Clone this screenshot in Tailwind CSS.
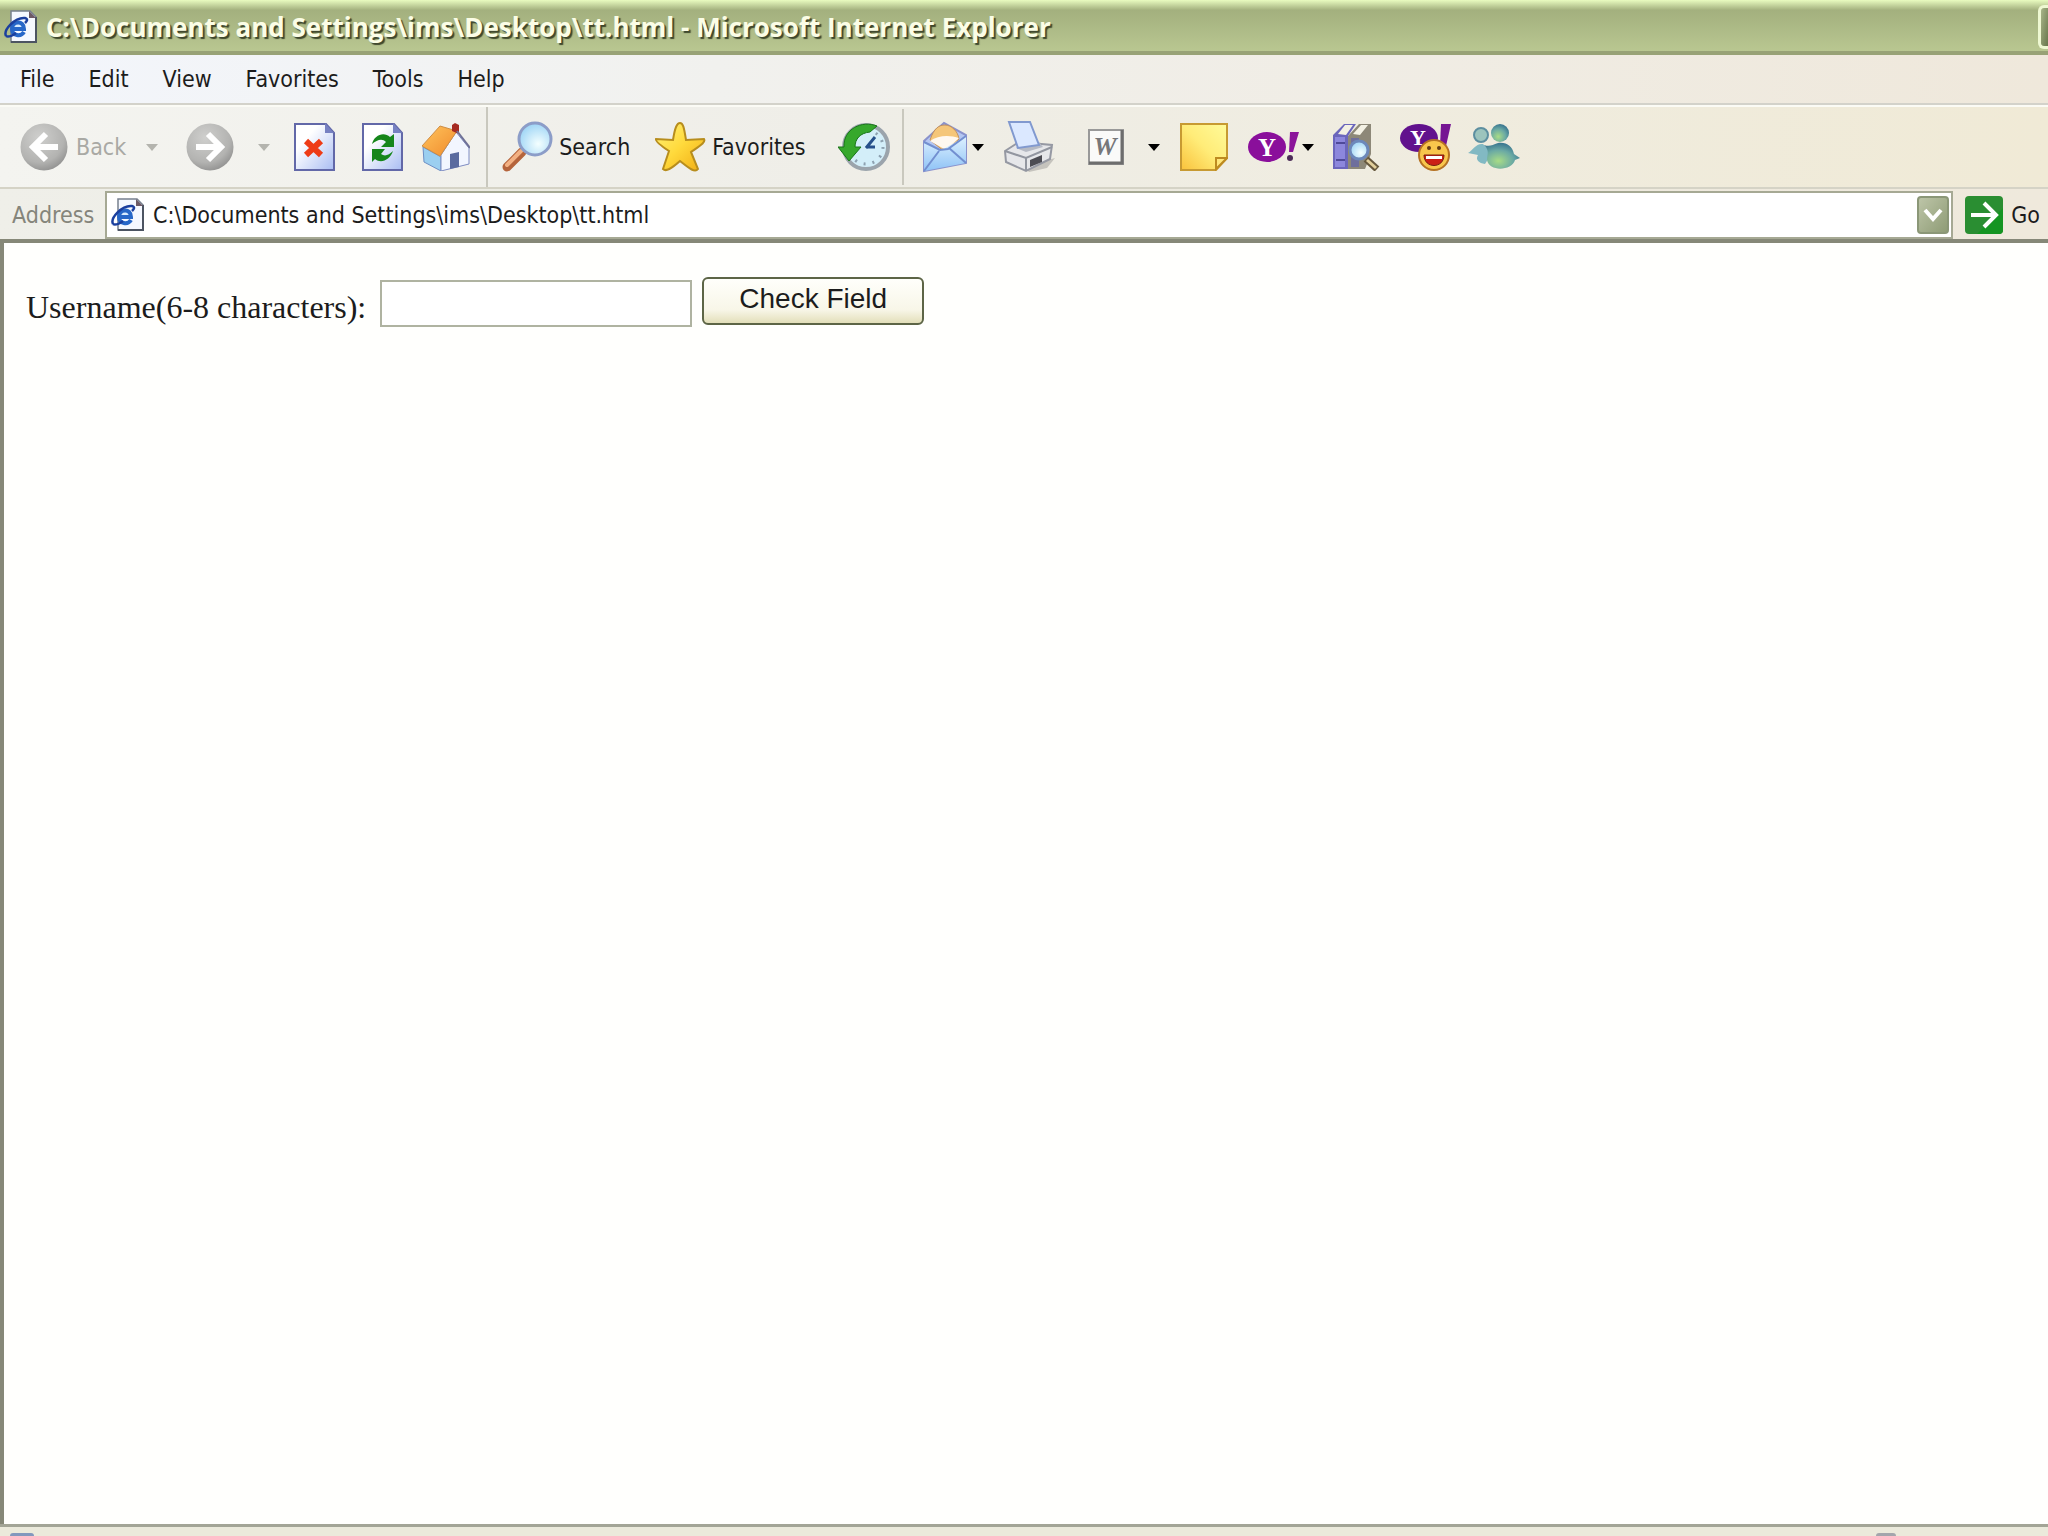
<!DOCTYPE html>
<html lang="en">
<head>
    <meta charset="UTF-8">
    <meta name="viewport" content="width=device-width, initial-scale=1.0">
    <title>C:\Documents and Settings\ims\Desktop\tt.html - Microsoft Internet Explorer</title>
    <script src="https://cdn.jsdelivr.net/npm/@tailwindcss/browser@4"></script>
</head>
<body class="flex h-screen flex-col overflow-hidden bg-[#fffffd] font-['DejaVu_Sans_Condensed','Noto_Sans',sans-serif] text-[23px] text-[#1c1c1c]">

    <!-- Shared icon shapes -->
    <svg class="absolute size-0" aria-hidden="true">
        <defs>
            <linearGradient id="paper" x1="0" y1="0" x2="1" y2="1"><stop offset="0.3" stop-color="#fff"/><stop offset="1" stop-color="#a9bdf3"/></linearGradient>
            <radialGradient id="gray" cx="0.4" cy="0.3" r="0.75"><stop offset="0" stop-color="#cfcfcd"/><stop offset="0.7" stop-color="#b3b3b1"/><stop offset="1" stop-color="#8f8f8e"/></radialGradient>
            <radialGradient id="glass" cx="0.6" cy="0.65" r="0.7"><stop offset="0" stop-color="#f4ffff"/><stop offset="1" stop-color="#98d2f5"/></radialGradient>
            <linearGradient id="gold" x1="0" y1="0" x2="1" y2="1"><stop offset="0" stop-color="#fff27a"/><stop offset="0.5" stop-color="#ffd93b"/><stop offset="1" stop-color="#f0ab12"/></linearGradient>
            <linearGradient id="roof" x1="0" y1="0" x2="1" y2="1"><stop offset="0" stop-color="#ffc45c"/><stop offset="1" stop-color="#f08a2c"/></linearGradient>
            <linearGradient id="mail" x1="0" y1="0" x2="0" y2="1"><stop offset="0" stop-color="#dff2ff"/><stop offset="1" stop-color="#8fc3f6"/></linearGradient>
            <linearGradient id="note" x1="1" y1="0" x2="0" y2="1"><stop offset="0" stop-color="#fffb9a"/><stop offset="0.5" stop-color="#ffec78"/><stop offset="1" stop-color="#f9c23c"/></linearGradient>
            <radialGradient id="buddy" cx="0.4" cy="0.7" r="0.7"><stop offset="0" stop-color="#a8dc86"/><stop offset="0.6" stop-color="#6aa9a4"/><stop offset="1" stop-color="#39758f"/></radialGradient>
            <symbol id="ie-page" viewBox="0 0 34 34">
                <path d="M7 1h19l6 6v25H7z" fill="#f5f8ff" stroke="#77808f" stroke-width="1.5"/>
                <path d="M32 7v25H7" fill="none" stroke="#4c5462" stroke-width="2"/>
                <path d="M25 1l7 7h-7z" fill="#6d5a66"/>
                <path d="M21 19H9c0-11 12-11 12-1z" fill="#d9ecff"/>
                <path d="M20 22c-3 5-12 4-12-3 0-8 12-9 12 0H9" fill="none" stroke="#2767c8" stroke-width="4"/>
                <path d="M2 26C-1 20 11 7 21 8c4 1 1 4 0 5M2 26c3 2 7-1 10-3" fill="none" stroke="#1b3f9e" stroke-width="2.5"/>
            </symbol>
            <symbol id="caret" viewBox="0 0 12 7"><path d="M0 0h12L6 7z"/></symbol>
        </defs>
    </svg>

    <!-- Title bar -->
    <header class="flex h-[55px] shrink-0 items-center justify-between border-b-4 border-[#98a276] bg-linear-to-b from-[#e9fbc0] via-[#a3b07e] via-20% to-[#b9c791] pt-[2px] pl-1">
        <h1 class="flex items-center gap-2 font-['Open_Sans','Noto_Sans',sans-serif] text-[26px] leading-8 font-bold whitespace-nowrap text-[#fbfde6] [text-shadow:2px_2px_1px_#3f472c]">
            <svg class="size-[34px]"><use href="#ie-page"/></svg>
            C:\Documents and Settings\ims\Desktop\tt.html - Microsoft Internet Explorer
        </h1>
        <button class="h-[44px] w-[10px] rounded-l-md border-3 border-r-0 border-[#eef8d2] bg-linear-to-br from-[#a9b68a] to-[#68764c]" aria-label="Minimize"></button>
    </header>

    <!-- Menu bar -->
    <nav class="flex h-[50px] shrink-0 items-center gap-[34px] border-b-2 border-[#d3d2ca] bg-linear-to-r from-[#f3f6fc] via-[#f1f1ee] via-35% to-[#efe8db] pl-5">
        <a href="#">File</a>
        <a href="#">Edit</a>
        <a href="#">View</a>
        <a href="#">Favorites</a>
        <a href="#">Tools</a>
        <a href="#">Help</a>
    </nav>

    <!-- Standard toolbar -->
    <div class="flex h-[84px] shrink-0 items-center border-t-2 border-b-2 border-t-[#fbfbf5] border-b-[#d5d3c6] bg-linear-to-r from-[#f4f4f0] via-[#efeee8] via-40% to-[#f0ead6] pl-5">
        <button class="flex items-center gap-2 text-[#a9a9a4]">
            <svg class="size-12" viewBox="0 0 48 48"><circle cx="24" cy="24" r="23.5" fill="url(#gray)"/><path d="M38 24H14M26 11L13 24l13 13" fill="none" stroke="#fff" stroke-width="6"/></svg>
            Back
        </button>
        <button class="ml-5 w-4" aria-label="Back history"><svg class="h-[7px] w-3 fill-[#b4b4ae]"><use href="#caret"/></svg></button>
        <button class="ml-6" aria-label="Forward">
            <svg class="size-12" viewBox="0 0 48 48"><circle cx="24" cy="24" r="23.5" fill="url(#gray)"/><path d="M10 24h24M22 11l13 13-13 13" fill="none" stroke="#fff" stroke-width="6"/></svg>
        </button>
        <button class="ml-6 w-4" aria-label="Forward history"><svg class="h-[7px] w-3 fill-[#b4b4ae]"><use href="#caret"/></svg></button>
        <button class="ml-4" aria-label="Stop">
            <svg class="size-12" viewBox="0 0 48 48">
                <path d="M5 1h31l8 9v37H5z" fill="url(#paper)" stroke="#6268a8" stroke-width="2"/><path d="M35 0v10h9z" fill="#7781c2"/>
                <path d="M16 18l15 14M31 18L16 32" stroke="#ee3b16" stroke-width="6"/>
            </svg>
        </button>
        <button class="ml-5" aria-label="Refresh">
            <svg class="size-12" viewBox="0 0 48 48">
                <path d="M5 1h31l8 9v37H5z" fill="url(#paper)" stroke="#6268a8" stroke-width="2"/><path d="M35 0v10h9z" fill="#7781c2"/>
                <path d="M14 21c2-9 12-13 18-7l4-3v13H23l5-5c-4-4-9-2-14 2zM35 28c-3 9-12 13-18 8l-3 3V26h13l-4 5c4 3 8 1 12-3z" fill="#15861b"/>
            </svg>
        </button>
        <button class="ml-4" aria-label="Home">
            <svg class="size-12" viewBox="0 0 48 48">
                <path d="M1 24l18 10v14L2 39z" fill="#9bcff0" stroke="#6d8fc4"/>
                <path d="M19 32L34 9l13 16v16L19 48z" fill="#f2f6ff" stroke="#7f8cc2"/>
                <path d="M0 23L18 3l17 5-17 25z" fill="url(#roof)" stroke="#ce8d44"/>
                <path d="M30 8v-6l3-2 4 2v9z" fill="#a52a20"/>
                <path d="M35 8l13 17" stroke="#6f7196" stroke-width="2"/>
                <path d="M28 31l9-2v15l-9 2z" fill="#5a6b9f"/>
            </svg>
        </button>
        <div class="ml-4 h-[80px] w-[2px] bg-[#c9c8be]"></div>
        <button class="ml-3.5 flex items-center gap-1.5">
            <svg class="h-[52px] w-[51px]" viewBox="0 0 51 52">
                <path d="M5 46L20 31" stroke="#b5643c" stroke-width="9" stroke-linecap="round"/><path d="M5 44L19 30" stroke="#f3b183" stroke-width="4" stroke-linecap="round"/>
                <circle cx="33" cy="18" r="16" fill="url(#glass)" stroke="#8c9dc8" stroke-width="3"/>
            </svg>
            Search
        </button>
        <button class="ml-6 flex items-center gap-1.5">
            <svg class="h-[52px] w-[52px]" viewBox="0 0 52 52"><path d="M26 2c3 0 4 4 6 17l18-1c2 3-3 6-13 13l7 17c-3 4-8 0-18-8-9 8-14 11-17 8l6-18C6 24 1 20 2 18l17 1C21 6 23 2 26 2z" fill="url(#gold)" stroke="#b78d1d" stroke-width="2"/></svg>
            Favorites
        </button>
        <button class="ml-8" aria-label="History">
            <svg class="h-12 w-[52px]" viewBox="0 0 52 48">
                <circle cx="28" cy="24" r="22" fill="#d3eef9" stroke="#9ba4ac" stroke-width="4"/>
                <circle cx="28" cy="24" r="17" fill="none" stroke="#8da1b0" stroke-width="3" stroke-dasharray="2 7"/>
                <path d="M28 25l9-11M28 24h9" stroke="#26508b" stroke-width="3"/>
                <path d="M39 3C24-3 5 6 6 24H0l11 14 12-14h-6c0-8 5-14 15-15z" fill="#36a82c" stroke="#197519"/>
            </svg>
        </button>
        <div class="ml-3 h-[76px] w-[2px] bg-[#c9c8be]"></div>
        <button class="ml-4.5" aria-label="Mail">
            <svg class="h-[52px] w-[46px]" viewBox="0 0 46 52">
                <path d="M2 20L22 2l22 12v28L2 50z" fill="#b4c6f2" stroke="#8a92cc" stroke-width="2"/>
                <path d="M8 19C12 7 17 4 23 4s13 6 14 14L23 31z" fill="#f5c679" stroke="#c08f5e"/><path d="M8 20c8-6 20-6 29-3L24 29z" fill="#fff8ef"/>
                <path d="M2 21l18 8 24-14v27L2 50z" fill="url(#mail)"/>
                <path d="M2 21l16 8 8-1 18-13M2 50l15-20M44 42L27 27" fill="none" stroke="#728fd0" stroke-width="2"/>
            </svg>
        </button>
        <button class="w-4" aria-label="Mail options"><svg class="ml-1 h-[7px] w-3 fill-black"><use href="#caret"/></svg></button>
        <button class="ml-5" aria-label="Print">
            <svg class="h-[52px] w-[52px]" viewBox="0 0 52 52">
                <path d="M20 46l31-9-8 10-18 4z" fill="#c5c3bd"/>
                <path d="M1 30l14-9 33 3-2 14-24 12L2 41z" fill="#e6e7ea" stroke="#9699a3" stroke-width="2"/>
                <path d="M1 30l21 7 26-11M22 37v13" fill="none" stroke="#9296a0" stroke-width="2"/>
                <path d="M12 27l10 4 17-5-4-5-17-1z" fill="#b6bac4"/>
                <path d="M5 1h21l9 23-21 3z" fill="#dbe8ff" stroke="#8199cf" stroke-width="2"/>
                <path d="M26 39l12-5v7l-12 5z" fill="#4c4c53"/>
            </svg>
        </button>
        <button class="ml-8" aria-label="Edit with Word">
            <svg class="h-[36px] w-[36px]" viewBox="0 0 36 36">
                <path d="M1 1h34v34H1z" fill="#fafaf9" stroke="#999" stroke-width="2"/><path d="M34 1v33H1" fill="none" stroke="#6d6d6d" stroke-width="3"/>
                <text x="17" y="26" text-anchor="middle" font-family="Liberation Serif" font-size="26" font-weight="bold" font-style="italic" fill="#77777a">W</text>
            </svg>
        </button>
        <button class="ml-6 w-4" aria-label="Edit options"><svg class="h-[7px] w-3 fill-black"><use href="#caret"/></svg></button>
        <button class="ml-4" aria-label="Notes">
            <svg class="h-12 w-12" viewBox="0 0 48 48"><path d="M1 1h46v34L36 47H1z" fill="url(#note)" stroke="#c79a32" stroke-width="2"/><path d="M36 46V35h11z" fill="#ffe67a" stroke="#bd8a20" stroke-width="2"/></svg>
        </button>
        <button class="ml-5" aria-label="Yahoo">
            <svg class="h-[32px] w-[52px]" viewBox="0 0 52 32">
                <ellipse cx="19" cy="16" rx="19" ry="15" fill="#8a0f9b"/>
                <text x="19" y="25" text-anchor="middle" font-family="Liberation Serif" font-size="25" font-weight="bold" fill="#fff">Y</text>
                <path d="M42 1h9l-6 20h-4z" fill="#8b149a"/><circle cx="42" cy="27" r="3" fill="#4c2c58"/>
            </svg>
        </button>
        <button class="w-4" aria-label="Yahoo options"><svg class="ml-[2px] h-[7px] w-3 fill-black"><use href="#caret"/></svg></button>
        <button class="ml-4" aria-label="Research">
            <svg class="h-12 w-12" viewBox="0 0 48 48">
                <path d="M1 12L12 1h12l-8 12v33H1z" fill="#6b66bc"/><path d="M3 14h10v30H3z" fill="#8c87dc"/><path d="M4 20h9M4 37h9" stroke="#4f4a99" stroke-width="2"/>
                <path d="M16 13L27 1h12v30l-6 15H16z" fill="#8d8878"/><path d="M6 11l7-9h8l-7 10zM21 11l8-9h7l-8 10z" fill="#f3f1e4"/><path d="M19 15h8v29h-8z" fill="#6f6f9c"/>
                <path d="M34 36l11 10" stroke="#66583e" stroke-width="7"/><path d="M35 37l9 8" stroke="#e2cf9c" stroke-width="3"/>
                <circle cx="27" cy="27" r="9" fill="url(#glass)" stroke="#6c88ba" stroke-width="3"/>
            </svg>
        </button>
        <button class="ml-5" aria-label="Yahoo Messenger">
            <svg class="h-12 w-[52px]" viewBox="0 0 52 48">
                <ellipse cx="19" cy="15" rx="19" ry="14" fill="#61118d"/>
                <text x="18" y="22" text-anchor="middle" font-family="Liberation Serif" font-size="22" font-weight="bold" fill="#fff">Y</text>
                <path d="M41 1h10l-5 22h-6z" fill="#761593"/>
                <circle cx="34" cy="32" r="15" fill="#f8c64c" stroke="#b57223" stroke-width="2"/>
                <path d="M24 32h20c0 14-20 14-20 0z" fill="#cb1e16" stroke="#762011"/><path d="M26 33h16v3H26z" fill="#fff"/>
                <circle cx="29" cy="25" r="2" fill="#643c12"/><circle cx="39" cy="25" r="2" fill="#643c12"/>
            </svg>
        </button>
        <button class="ml-4" aria-label="Windows Messenger">
            <svg class="h-12 w-[52px]" viewBox="0 0 52 48">
                <circle cx="13" cy="12" r="7" fill="#9cc4bd" stroke="#5d8fa0" stroke-width="2"/>
                <path d="M0 30c5-3 8-10 15-9l9 9-7 11C11 40 7 37 10 32z" fill="#82b9c3"/>
                <circle cx="32" cy="10" r="9" fill="url(#buddy)"/>
                <path d="M16 22c6 2 8 0 14-2 9-1 14 3 16 11l6 4-5 2c-3 11-26 12-28 0 0-6 3-9-3-15z" fill="url(#buddy)"/>
            </svg>
        </button>
    </div>

    <!-- Address bar -->
    <form class="flex h-[50px] shrink-0 items-center bg-linear-to-r from-[#efefe9] via-[#ecebe2] via-40% to-[#efe9dc] pt-[2px] pl-3">
        <label for="address" class="w-[93px] text-[#85857b]">Address</label>
        <div class="flex h-[48px] flex-1 items-center gap-2 border-2 border-[#a6a994] bg-white pr-[2px] pl-1">
            <svg class="size-[34px]"><use href="#ie-page"/></svg>
            <input id="address" type="text" value="C:\Documents and Settings\ims\Desktop\tt.html" class="h-9 min-w-0 flex-1 outline-none">
            <button type="button" class="flex h-[38px] w-8 items-center justify-center rounded-sm border-2 border-[#8b9777] bg-linear-to-br from-[#bdc5a8] to-[#8f9c76]" aria-label="Address history">
                <svg class="h-4 w-5" viewBox="0 0 20 16"><path d="M2 3l8 9 8-9" fill="none" stroke="#fff" stroke-width="4"/></svg>
            </button>
        </div>
        <button type="button" class="mr-2 ml-3 flex items-center gap-2">
            <svg class="size-[38px]" viewBox="0 0 38 38"><rect width="38" height="38" rx="4" fill="#2a8e32"/><path d="M38 12v22a4 4 0 0 1-4 4H12z" fill="#159522"/><path d="M6 19h24M19 7l12 12-12 12" fill="none" stroke="#fff" stroke-width="4"/></svg>
            Go
        </button>
    </form>

    <!-- Page -->
    <main class="min-h-0 flex-1 border-t-4 border-l-4 border-[#868878] bg-[#fffffd] pt-[34px] pl-[22px]">
        <form class="flex items-start font-['Liberation_Serif',serif] text-[32px]">
            <label for="username" class="pt-2 leading-[44px]">Username(6-8 characters):</label>
            <input id="username" type="text" maxlength="8" class="mt-[3px] ml-[14px] h-[47px] w-[312px] border-2 border-[#afb3a1] bg-white px-2 text-[28px]">
            <button type="button" class="ml-[10px] h-[48px] w-[222px] rounded-md border-2 border-[#5d6546] bg-linear-to-b from-[#fffffb] via-[#f8f6e8] via-70% to-[#e3dfba] pb-1 font-['Liberation_Sans',sans-serif] text-[28px] leading-8">Check Field</button>
        </form>
    </main>

    <!-- Status bar -->
    <footer class="flex h-[12px] shrink-0 items-end justify-between border-t-3 border-[#a3a596] bg-[#ebeadb] pr-[152px] pl-[10px]">
        <div class="h-[3px] w-6 rounded-t-sm bg-[#8298bd]"></div>
        <div class="h-[3px] w-5 rounded-t-full bg-[#a3a6ac]"></div>
    </footer>

</body>
</html>
